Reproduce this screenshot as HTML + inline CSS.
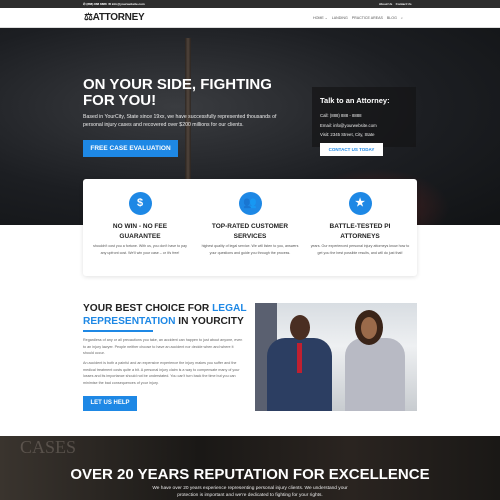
<!DOCTYPE html>
<html><head><meta charset="utf-8"><style>
*{margin:0;padding:0;box-sizing:border-box}
body{width:500px;height:500px;overflow:hidden;background:#fff;font-family:"Liberation Sans",sans-serif;position:relative}
.a{position:absolute}
.top{left:0;top:0;width:500px;height:8px;background:#2d2d2d;color:#fff;font-size:3px;font-weight:bold}
.nav{left:0;top:8px;width:500px;height:20px;background:#fff;border-bottom:1px solid #ddd}
.hero{left:0;top:28px;width:500px;height:197px;background:radial-gradient(ellipse at 35% 40%,#3a3c40 0%,#1c1e22 55%,#111315 100%)}
h1{font-size:15px;line-height:16px;color:#fff;font-weight:bold}
.btn{background:#1e88e5;color:#fff;font-weight:bold;text-align:center}
.card{left:83px;top:179px;width:334px;height:97px;background:#fff;border-radius:3px;box-shadow:0 1px 5px rgba(0,0,0,.12)}
.col{position:absolute;top:0;width:100px;text-align:center}
.ic{width:23px;height:23px;border-radius:50%;background:#1e88e5;margin:13px auto 0;color:#fff;font-size:11px;line-height:23px;font-weight:bold}
.col h3{font-size:6.5px;line-height:9.5px;font-weight:bold;color:#222;margin-top:7px}
.col p{font-size:3.6px;line-height:6.6px;color:#555;margin-top:2px}
.p{font-size:3.7px;line-height:6.5px;color:#666}
</style></head><body>
<div class="a top"><span class="a" style="left:83px;top:2px">✆ (888) 888 8888 &nbsp;✉ info@yourwebsite.com</span><span class="a" style="left:379px;top:2px">About Us &nbsp;&nbsp; Contact Us</span></div>
<div class="a nav">
<div class="a" style="left:84px;top:4px;font-size:10px;font-weight:bold;color:#222;letter-spacing:-.3px">⚖ATTORNEY</div>
<div class="a" style="left:313px;top:8px;font-size:3.6px;color:#555;white-space:nowrap">HOME ⌄ &nbsp;&nbsp; LANDING &nbsp;&nbsp; PRACTICE AREAS &nbsp;&nbsp; BLOG &nbsp;&nbsp; ⌕</div>
</div>
<div class="a hero">
<div class="a" style="left:185px;top:10px;width:6px;height:190px;background:linear-gradient(90deg,#2a221c,#5a4a3e,#2a221c);opacity:.8"></div>
<div class="a" style="left:300px;top:140px;width:150px;height:57px;background:radial-gradient(ellipse at 50% 70%,#4a2020,transparent 70%)"></div>
</div>
<h1 class="a" style="left:83px;top:77px">ON YOUR SIDE, FIGHTING<br>FOR YOU!</h1>
<div class="a" style="left:83px;top:113px;width:195px;font-size:5.2px;line-height:8px;color:#eee">Based in YourCity, State since 19xx, we have successfully represented thousands of personal injury cases and recovered over $200 millions for our clients.</div>
<div class="a btn" style="left:83px;top:140px;width:95px;height:17px;font-size:6.5px;line-height:17px">FREE CASE EVALUATION</div>
<div class="a" style="left:312px;top:87px;width:104px;height:60px;background:rgba(20,20,22,.7)"></div>
<div class="a" style="left:320px;top:96px;font-size:7.5px;font-weight:bold;color:#fff">Talk to an Attorney:</div>
<div class="a" style="left:320px;top:111px;font-size:4.3px;line-height:9.5px;color:#eee">Call: (888) 888 - 8888<br>Email: info@yourwebsite.com<br>Visit: 2345 Street, City, State</div>
<div class="a" style="left:320px;top:143px;width:63px;height:13px;background:#fff;color:#1e88e5;font-size:4.5px;font-weight:bold;text-align:center;line-height:13px">CONTACT US TODAY</div>
<div class="a card">
<div class="col" style="left:7px"><div class="ic">$</div><h3>NO WIN - NO FEE<br>GUARANTEE</h3><p>shouldn't cost you a fortune. With us, you don't have to pay any upfront cost. We'll win your case – or it's free!</p></div>
<div class="col" style="left:117px"><div class="ic">👥</div><h3>TOP-RATED CUSTOMER<br>SERVICES</h3><p>highest quality of legal service. We will listen to you, answers your questions and guide you through the process.</p></div>
<div class="col" style="left:227px"><div class="ic">★</div><h3>BATTLE-TESTED PI<br>ATTORNEYS</h3><p>years. Our experienced personal injury attorneys know how to get you the best possible results, and will do just that!</p></div>
</div>
<div class="a" style="left:83px;top:303px;font-size:10.2px;line-height:12.5px;font-weight:bold;color:#222">YOUR BEST CHOICE FOR <span style="color:#1e88e5">LEGAL<br>REPRESENTATION</span> IN YOURCITY</div>
<div class="a" style="left:83px;top:330px;width:70px;height:2px;background:#1e88e5"></div>
<div class="a p" style="left:83px;top:337px;width:162px">Regardless of any or all precautions you take, an accident can happen to just about anyone, even to an injury lawyer. People neither choose to have an accident nor decide when and where it should occur.</div>
<div class="a p" style="left:83px;top:360px;width:162px">An accident is both a painful and an expensive experience the injury makes you suffer and the medical treatment costs quite a bit. A personal injury claim is a way to compensate many of your losses and its importance should not be understated. You can't turn back the time but you can minimise the bad consequences of your injury.</div>
<div class="a btn" style="left:83px;top:396px;width:54px;height:15px;font-size:6px;line-height:15px">LET US HELP</div>
<div class="a" style="left:255px;top:303px;width:162px;height:108px;background:linear-gradient(180deg,#d8dde2,#eef0f2 40%,#c8ccd0)">
<div class="a" style="left:0;top:0;width:22px;height:108px;background:#5a6070"></div>
<div class="a" style="left:12px;top:35px;width:65px;height:73px;background:#2c3e62;border-radius:18px 18px 0 0"></div>
<div class="a" style="left:35px;top:12px;width:20px;height:25px;background:#4a2e22;border-radius:50%"></div>
<div class="a" style="left:42px;top:40px;width:5px;height:30px;background:#c02030"></div>
<div class="a" style="left:90px;top:35px;width:60px;height:73px;background:#b8bac4;border-radius:18px 18px 0 0"></div>
<div class="a" style="left:100px;top:7px;width:28px;height:35px;background:#3a2418;border-radius:50%"></div>
<div class="a" style="left:106px;top:14px;width:16px;height:22px;background:#9a6a4a;border-radius:50%"></div>
</div>
<div class="a" style="left:0;top:436px;width:500px;height:64px;background:linear-gradient(90deg,#3a342e,#1a1816 40%,#2a2420 70%,#1a1816)"></div>
<div class="a" style="left:20px;top:437px;font-size:18px;color:rgba(160,150,140,.35);font-family:'Liberation Serif',serif">CASES</div>
<div class="a" style="left:0;top:466px;width:500px;text-align:center;font-size:15px;font-weight:bold;color:#fff">OVER 20 YEARS REPUTATION FOR EXCELLENCE</div>
<div class="a" style="left:0;top:485px;width:500px;text-align:center;font-size:4.8px;line-height:7px;color:#eee">We have over 20 years experience representing personal injury clients. We understand your<br>protection is important and we're dedicated to fighting for your rights.</div>
</body></html>
